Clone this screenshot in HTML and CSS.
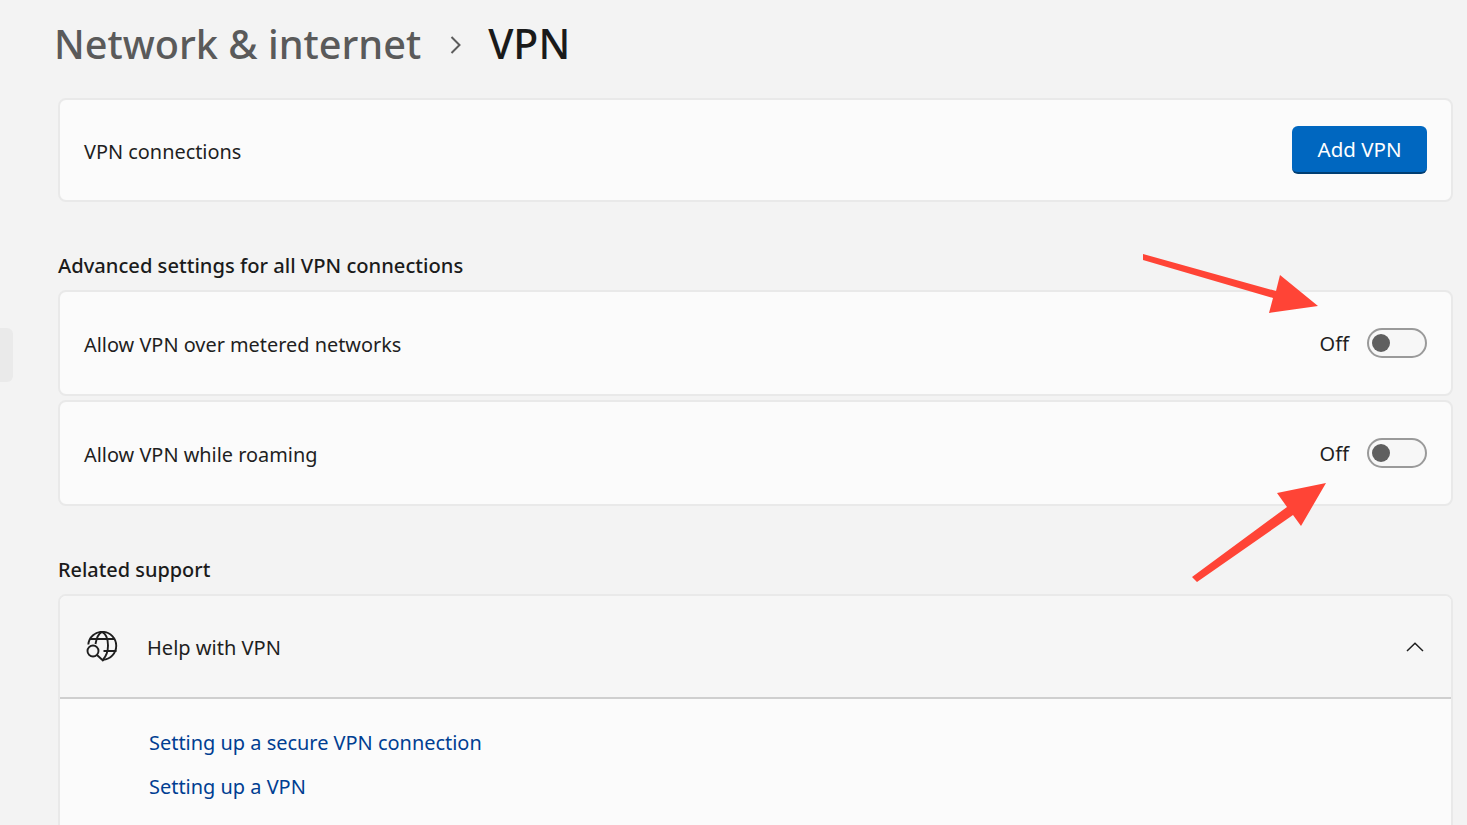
FILE: index.html
```html
<!DOCTYPE html>
<html lang="en">
<head>
<meta charset="utf-8">
<title>VPN</title>
<link rel="stylesheet" href="styles.css">
</head>
<body>
<div class="page">
  <div class="nav-pill"></div>
  <main class="main">
    <header class="crumbs">
      <span class="crumb-parent">Network &amp; internet</span>
      <svg class="crumb-sep" width="14" height="20" viewBox="0 0 14 20"><path d="M2.500 2 L10.500 10 L2.500 18" fill="none" stroke="#5c5c5c" stroke-width="2"/></svg>
      <span class="crumb-current">VPN</span>
    </header>

    <section class="card row first-card">
      <span class="label">VPN connections</span>
      <button class="primary">Add VPN</button>
    </section>

    <h2 class="section-title advanced">Advanced settings for all VPN connections</h2>
    <section class="card row toggle-card">
      <span class="label">Allow VPN over metered networks</span>
      <div class="toggle-wrap"><span class="state">Off</span><span class="toggle"><span class="knob"></span></span></div>
    </section>
    <section class="card row toggle-card second">
      <span class="label">Allow VPN while roaming</span>
      <div class="toggle-wrap"><span class="state">Off</span><span class="toggle"><span class="knob"></span></span></div>
    </section>

    <h2 class="section-title related">Related support</h2>
    <section class="card support">
      <div class="support-head">
        <svg class="globe" width="32" height="32" viewBox="0 0 32 32" fill="none" stroke="#1f1f1f" stroke-width="1.900">
          <path d="M2.300 13.500 A14 14 0 1 1 17 28.800"/>
          <path d="M4 8 H28 M17.500 20 H30.500"/>
          <path d="M9.500 13 C10.500 7 12.500 2.500 16 0.800 C19.500 2.500 22 8 22 14.500 C22 20.500 20 25.500 16.800 28.800"/>
          <circle cx="7" cy="20" r="5.500"/>
          <path d="M11 24 L17.500 30"/>
        </svg>
        <span class="label help">Help with VPN</span>
        <svg class="chevron" width="18" height="12" viewBox="0 0 18 12"><path d="M1 10 L9 2.300 L17 10" fill="none" stroke="#1f1f1f" stroke-width="1.500"/></svg>
      </div>
      <div class="support-body">
        <a class="link" href="#">Setting up a secure VPN connection</a>
        <a class="link" href="#">Setting up a VPN</a>
      </div>
    </section>
  </main>

  <svg class="arrows" width="1467" height="825" viewBox="0 0 1467 825">
    <polygon fill="#ff4436" points="1143,254 1276,291 1280,275 1318,306 1269,313 1273,298 1143,260"/>
    <polygon fill="#ff4436" points="1326,483 1277,493 1287,507 1192,577 1197,582 1293,515 1301,526"/>
  </svg>
</div>
</body>
</html>
```
FILE: styles.css
```css
* { box-sizing: border-box; }
html, body { margin: 0; height: 100%; }
body {
  background: #f3f3f3;
  color: #1b1b1b;
  font-family: "Noto Sans", "Open Sans", "Liberation Sans", sans-serif;
  overflow: hidden;
}
.page { position: relative; width: 1467px; height: 825px; overflow: hidden; }
.nav-pill {
  position: absolute; left: -8px; top: 328px;
  width: 21px; height: 54px;
  background: #eaeaea; border-radius: 6px;
}
.main { padding: 0 14px 0 58px; }
.crumbs {
  height: 98px; display: flex; align-items: baseline;
  margin-left: -4px; padding-top: 23px;
}
.crumb-parent { font-size: 39.700px; font-weight: 500; color: #5a5a5a; line-height: 41px; }
.crumb-sep { margin: 0 25px 0 28px; align-self: flex-start; transform: translateY(12px); }
.crumb-current { font-size: 41px; font-weight: 500; color: #1a1a1a; line-height: 41px; }
.card {
  background: #fbfbfb;
  border: 2px solid #e9e9e9;
  border-radius: 8px;
}
.row {
  display: flex; align-items: center; justify-content: space-between;
  padding: 2px 24px 0;
}
.first-card { height: 104px; }
.toggle-card { height: 106px; }
.toggle-card.second { margin-top: 4px; }
.label { font-size: 19.900px; line-height: 28px; color: #1f1f1f; padding-top: 2px; }
.primary {
  width: 135px; height: 48px;
  background: #0067c0; color: #fff;
  border: 0; border-bottom: 2px solid #003e73; border-radius: 6px;
  font: 20.500px/28px "Noto Sans", sans-serif;
  margin-bottom: 2px;
}
.section-title {
  margin: 0; font-size: 20.150px; font-weight: 500; line-height: 27px; color: #1b1b1b;
}
.advanced { padding: 50px 0 11px; }
.related { padding: 50px 0 11px; font-size: 19.900px; }
.toggle-wrap { display: flex; align-items: center; gap: 18px; margin-bottom: 2px; }
.state { font-size: 20px; line-height: 28px; color: #1f1f1f; padding-top: 1px; }
.toggle {
  width: 60px; height: 30px;
  display: flex; align-items: center; padding-left: 3px;
  background: #f7f7f7;
  border: 2px solid #9a9a9a; border-radius: 15px;
}
.knob { width: 18px; height: 18px; border-radius: 50%; background: #5f5f5f; }
.support { overflow: hidden; height: 260px; }
.support-head {
  height: 103px; display: flex; align-items: center;
  background: #f6f6f6; border-bottom: 2px solid #cfcfcf;
  padding: 0 27px 0 26px;
}
.globe { flex: none; }
.help { margin-left: 29px; flex: 1; font-size: 20.050px; }
.support-body {
  display: flex; flex-direction: column; gap: 16px;
  padding: 30px 0 0 89px;
}
.link { font-size: 19.950px; line-height: 28px; color: #003e92; text-decoration: none; }
.arrows { position: absolute; left: 0; top: 0; pointer-events: none; }
```
